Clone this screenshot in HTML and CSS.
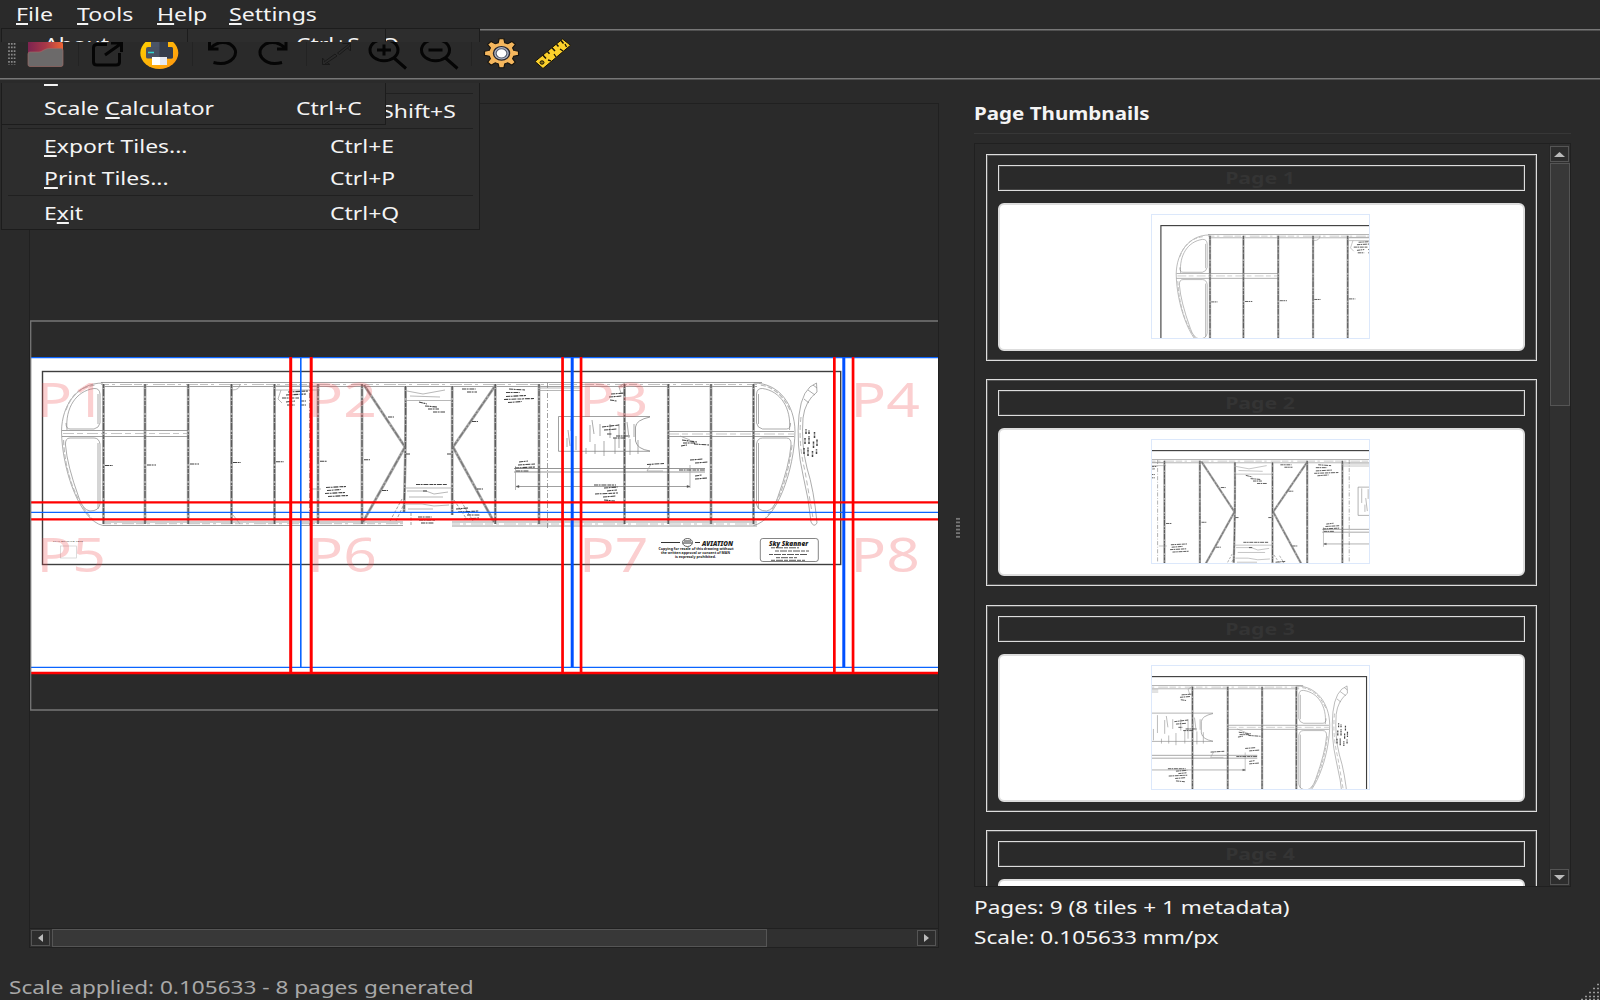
FILE: index.html
```html
<!DOCTYPE html>
<html lang="en">
<head>
<meta charset="utf-8">
<title>Tile Printer</title>
<link rel="stylesheet" href="styles.css">
</head>
<body>
<div class="window">
  <nav class="menubar">
    <span class="menubar-item file"><b class="t"><u>F</u>ile</b></span>
    <span class="menubar-item tools"><b class="t"><u>T</u>ools</b></span>
    <span class="menubar-item help"><b class="t"><u>H</u>elp</b></span>
    <span class="menubar-item settings"><b class="t"><u>S</u>ettings</b></span>
  </nav>

  <div class="menu menu-file">
    <div class="row first"><b class="t key">Ctrl+O</b></div>
    <div class="row second"></div>
    <hr>
    <div class="row"><b class="t key">Ctrl+Shift+S</b></div>
    <hr>
    <div class="row"><b class="t"><u>E</u>xport Tiles...</b><b class="t key">Ctrl+E</b></div>
    <div class="row"><b class="t"><u>P</u>rint Tiles...</b><b class="t key">Ctrl+P</b></div>
    <hr>
    <div class="row"><b class="t">E<u>x</u>it</b><b class="t key">Ctrl+Q</b></div>
  </div>
  <div class="menu menu-tools">
    <div class="row first"><b class="t key">Ctrl+S</b></div>
    <div class="row second"><b class="t"><u>P</u></b></div>
    <div class="row"><b class="t">Scale <u>C</u>alculator</b><b class="t key">Ctrl+C</b></div>
  </div>
  <div class="menu menu-help">
    <div class="row first"><b class="t">About</b></div>
  </div>

  <div class="toolbar">
    <svg width="580" height="55" viewBox="0 28 580 55">
      <defs>
        <linearGradient id="folder" x1="0" x2="1" y1="0" y2="0"><stop offset="0" stop-color="#7c2350"/><stop offset=".5" stop-color="#a83848"/><stop offset="1" stop-color="#ee6535"/></linearGradient>
        <linearGradient id="amber" x1="0" x2="1" y1="0" y2="1"><stop offset="0" stop-color="#ffd400"/><stop offset="1" stop-color="#ff9410"/></linearGradient>
      </defs>
      <g stroke="#8a8a8a" stroke-width="1.700" stroke-dasharray="1.700 1.900"><path d="M9 43v22M11.800 43v22M14.600 43v22"/></g>
      <path d="M78.500 42v24M192.500 42v24M306.500 42v24M471.500 42v24" stroke="#232323"/>
      <path d="M28 39h17l3 3h13q2 0 2 2v21H28z" fill="url(#folder)"/>
      <path d="M28 54q0-2 2-2h9q2 0 4-1.500l2-1q2-1 4-1h12q2 0 2 2v14q0 2-2 2H30q-2 0-2-2z" fill="#6c6a6a" stroke="#9b6a66" stroke-width=".7"/>
      <g fill="none" stroke="#050505" stroke-width="3">
        <path d="M107 44.500H97q-3.500 0-3.500 3.200V62q0 3 3.500 3h19q3.500 0 3.500-3v-9M111 43h10.500v9M122 43l-17 12"/>
        <path d="M209.500 41v8h9M210 48.500q9-9 20-4.500q9 6 3.500 14q-7 8-20 4.500"/>
        <path d="M286 41v8h-9M285.500 48.500q-9-9-20-4.500q-9 6-3.500 14q7 8 20 4.500"/>
        <ellipse cx="384" cy="50" rx="14" ry="10.800"/><path d="M394 58l12 10.500M377 50h14M384 44.500v11"/>
        <ellipse cx="435.500" cy="50" rx="14" ry="10.800"/><path d="M445.500 58l12 10.500M428.500 50h14"/>
      </g>
      <g fill="none" stroke="#191919" stroke-width="1"><path d="M322.500 58v6.500h7.500M322.500 58l2 2.500M330 64.500l-3-2M350.500 51v-7.500h-8M350.500 51l-3-3M324 62l11-8 2 2-12 8M337.500 53l11-8.500 2 1-11 9z"/></g>
      <ellipse cx="159.300" cy="53" rx="19" ry="16" fill="url(#amber)"/>
      <path d="M151 40h17v8h-17z" fill="#4b5567"/>
      <path d="M146 49q0-2 2-2h23q2 0 2 2v8q0 1.500-2 1.500h-23q-2 0-2-1.500z" fill="#4a5363"/>
      <path d="M159.500 47H171q2 0 2 2v8q0 1.500-2 1.500h-11.500zM159.500 40h8.500v7h-8.500z" fill="#343c4b"/><path d="M148 52.500h6" stroke="#35d5d0" stroke-width="1.400"/>
      <path d="M152 57h15v8h-15z" fill="#fff"/><path d="M160 57h7v8h-7z" fill="#e4e7f0"/>
      <g transform="translate(501.500 53.300) scale(1.180 1)">
        <path d="M-2-14.500h4l.8 4 2.500 1 3.500-2.300 2.900 2.900-2.300 3.500 1 2.500 4 .9v4l-4 .9-1 2.500 2.300 3.500-2.900 2.900-3.500-2.300-2.500 1-.8 4h-4l-.8-4-2.500-1-3.500 2.300-2.900-2.900 2.300-3.500-1-2.500-4-.9v-4l4-.9 1-2.500-2.300-3.500 2.900-2.900 3.500 2.300 2.500-1z" fill="#f5b75e" stroke="#17140e" stroke-width="1"/>
        <circle r="6.800" fill="#aeb6c8" stroke="#2a2930" stroke-width="1.200"/><circle r="4.600" fill="#fff" stroke="#555c6c"/>
      </g>
      <g stroke="#171207" stroke-width="1"><path d="M535 61.500L562.500 39l8 6.300L543 68.500z" fill="#fbd02b"/><path d="M543 55.200l3 3.300M547.500 51.500l2 2.200M552 47.800l3 3.300M556.500 44.200l2 2.200M561 40.500l2.500 3" stroke-width="1.500"/><ellipse cx="542" cy="62.500" rx="2" ry="1.700" fill="#8a7418"/><path d="M548 60l3 .8M554 54l2 3M560 49l3 2M565 44l1.500 3" stroke-width="1.300"/></g>
    </svg>
  </div>

  <main class="workspace">
    <section class="canvas">
      <div class="view">
        <svg class="sheet" width="908" height="391" viewBox="30 320 908 391">
          <defs>
            <g id="plan" fill="none" stroke="#777" stroke-width=".7">
              <rect x="42.500" y="371.500" width="798.200" height="193" stroke="#3e3e3e" stroke-width="1.400"/>
              <path d="M101 382.500H762M103 386.500H757M103 522H403M103 525.500H403M452 522H757M452 526H757" stroke="#777"/>
              <path d="M101 384.500H757M103 523.700H403M452 524H757" stroke="#a5a5a5" stroke-dasharray="8 3 3 5 12 2"/>
              <g stroke="#aaa" stroke-width="2.800"><path d="M103.500 384V524M145 384V524M188.200 384V524M231.500 384V524M274.500 384V524M318 384V524M362 384V524M405.500 386Q406 450 404 512M452.200 386V515M495.300 384V524M539 384V524M624.500 384V524M668.300 384V524M711 384V524M753.500 384V524"/><path d="M364 385l41 62-42 75M495 386l-42 61 41 75"/></g>
              <g stroke="#5a5a5a" stroke-width="1.300" stroke-dasharray="4 1 7 2 2 1"><path d="M103.500 384V524M145 384V524M188.200 384V524M231.500 384V524M274.500 384V524M318 384V524M362 384V524M405.500 386Q406 450 404 512M452.200 386V515M495.300 384V524M539 384V524M624.500 384V524M668.300 384V524M711 384V524M753.500 384V524"/><path d="M364 385l41 62-42 75M495 386l-42 61 41 75" stroke="#777"/></g>
              <path d="M547.500 383V528M309.500 383v142" stroke-dasharray="5 2 1 2"/>
              <path id="tip" d="M103 383C77 383 62 405 61.500 431C62 470 80 521 103 525.500M67 430C65 408 76 391 94 388.500Q99.500 388 100 394V423Q99 428 94 429H70Q66 429 66 423M70 438H94Q99 438 100 444V504Q99 511 90 511Q83 510 79 498Q67 465 65.500 445Q65 438 70 438M98 394V424M98 443V509" stroke="#888"/>
              <path d="M63.500 440Q66 490 93 520M66 410Q74 387 96 385" stroke="#bbb" stroke-width="1.200" stroke-dasharray="5 2"/>
              <path d="M62 430.500H188M62 436.500H188M668 431.500H794M668 436.500H794"/>
              <path d="M63 433.500H188M668 434H794" stroke="#aaa" stroke-dasharray="11 3 6 4"/>
              <use href="#tip" transform="translate(856.500 0) scale(-1 1)"/>
              <path d="M790 410Q779 387 760 385M792 445Q786 495 764 520" stroke="#bbb" stroke-width="1.200" stroke-dasharray="5 2"/>
              <path d="M816.500 383Q802 388 799 415Q796 445 803 475Q809 500 811 522Q814 528 817 523Q814 490 807 468Q801 445 803 418Q805 401 817 392ZM813 385l4 3M808 390l7 5M804 399l5 4" stroke="#888"/>
              <path d="M801 417Q798 443 805 471L813 518" stroke="#999" stroke-dasharray="5 3"/>
              <path d="M650 416.500H558.500V451.300H650M650 417Q636 420 635.500 427V441Q637 449 650 451"/>
              <path d="M563 418v18m4 2v9m4-28v12m5 5v14m5-31v22m5 7v6m4-29v17m5 2v10m5-30v12m4 5v15m6-32v14m5 0v16m4-30v24m6-22v13m5 0v16m4-31v13m4 3v14M568 430l2 16m22-26l2 14m33-12l2 16" stroke="#888"/>
              <path d="M514 468.500H705M514 472H705" stroke="#666"/><path d="M515.500 466V490M690 465V488" stroke="#999"/><path d="M516 486.500H690" stroke="#777"/><path d="M516 486.500l3-1v2zM690 486.500l-3-1v2z" fill="#333"/>
              <path d="M405 400.500H452M405 488H452M407 391l16 3 22-4M410 396l30 1M407 491h19l8 3 14-2M409 497h34M406 504h16l12 2 15-1M408 509h25M276 386H320M276 390H320M538 388H582M538 390.500H582M232 390q8 0 8-6M233 515l7 9M311 489h10" stroke="#999"/>
              <path d="M390 521l12-22M396 521l8-17M454 500l12 18M461 501l12 20M411 513v13" stroke-dasharray="3 1.500" stroke="#777"/>
              <path d="M625 383l-6 4 2 6M281 390l-3 9 4 4M663 471l-16 0 4-7M680 436l10 4" stroke="#999"/>
              <g stroke="#444" stroke-width="1.050" stroke-dasharray="4 .6 2 .8 5 1">
                <path d="M105 465.500h8M147 465h9M190 464h9M233 462.500h8M276 461.800h8M320 461.300h7M364 459.800h6M388 417h6M382 490.500h6M472 421.500h6M477 489h6M406 454h4M447 454h4"/>
                <path d="M288 392l20-1m-22 4l20-1m-24 4h17m-13 4l9-1m5 0h6m-19 4h8m5 0h6"/>
                <path d="M419 402l8 2m-2 2l12 1m-9 2h11m-6 3h12M416 484.500h31M423 491h4M462 389h14m-9 3h10"/>
                <path d="M326 487.500l20-1m-19 4l14-1m-16 4l20-1m-17 4l20-1M418 517h14m-13 3h16m-14 3h13M456 509l12-1m-10 4l21-1m-12 4h13m-16 4l15-1"/>
                <path d="M509 389l16 1m-19 2.500h14m-14 4l20-1m-22 4l30-1m-26 4l14-1"/>
                <path d="M611 394l14-1m-16 4l13-1m-12 4l7 1m-15 26l17-2m-15 5l13-1m-10 5h5m4 2h14m-17 2h12"/>
                <path d="M519 462l9-1m-10 4l17-1m-20 4l20-1m-19 4h13M647 464.500l17-1M682 440l15 2m-14 1h12m-14 3l6-1m7-1l15 1M690 460l13-1m-8 4l13-1M679 470h26m-10 6l7-1m-7 4l12-1M594 485h22m-12 3l14-1m-11 4l10-1m-22 4l23-1m-15 4l13-1m-12 4l11 1"/>
              </g>
              <path d="M804 454v-6m1-4v-6m1-4v-5M808 456v-9m1-3v-8m0-2v-4M812.500 457v-6m1-3v-7m1-3v-6M816.500 454v-5m.5-3v-7" stroke="#444" stroke-width="1.500" stroke-dasharray="2 .5 1 .7"/>
              <rect x="60.500" y="546" width="16" height="12" stroke="#ccc"/><rect x="760.300" y="538.500" width="58" height="23" rx="2.500" stroke="#666" stroke-width=".8"/>
              <ellipse cx="687.500" cy="542.500" rx="5" ry="4" stroke="#222"/><path d="M683 543h9M684 541h7M661 542.500h19M695 542.500h5" stroke="#333" stroke-width="1"/>
              <g fill="#222" stroke="none" class="fine"><text x="53" y="542" textLength="30" font-size="2.500">PLAN DRAWING NOTE</text><text class="heavy" x="702" y="545.500" textLength="31" lengthAdjust="spacingAndGlyphs" font-size="6.500">AVIATION</text><text class="bold" x="658.500" y="549.800" textLength="75" lengthAdjust="spacingAndGlyphs" font-size="4">Copying for resale of this drawing without</text><text class="bold" x="661" y="554" textLength="69" lengthAdjust="spacingAndGlyphs" font-size="4">the written approval or consent of MAN</text><text class="bold" x="675" y="558.300" textLength="41" lengthAdjust="spacingAndGlyphs" font-size="4">is expressly prohibited.</text><text class="heavy" x="769" y="545.500" textLength="39" lengthAdjust="spacingAndGlyphs" font-size="7">Sky Skanner</text></g>
              <path d="M771 547.800h28M775 551h34M769 554.500h38M776 557.700h21M771 560.300h34" stroke="#444" stroke-width=".9" stroke-dasharray="4 1 7 1"/>
            </g>
          </defs>
          <rect x="31" y="357" width="907" height="317" fill="#fff"/>
          <use href="#plan"/>
          <g class="tile-label"><text transform="translate(36.500 417) scale(1.240 1)">P1</text><text transform="translate(307.500 417) scale(1.240 1)">P2</text><text transform="translate(579 417) scale(1.240 1)">P3</text><text transform="translate(850.500 417) scale(1.240 1)">P4</text><text transform="translate(36.500 572) scale(1.240 1)">P5</text><text transform="translate(307.500 572) scale(1.240 1)">P6</text><text transform="translate(579 572) scale(1.240 1)">P7</text><text transform="translate(850.500 572) scale(1.240 1)">P8</text></g>
          <g fill="#0a64ff"><path d="M31 357h907v1.200H31zM31 511.700h907v1.200H31zM31 666.700h907v1.200H31zM300 357h1.600v310h-1.600z"/><path d="M570.700 357h3v310h-3zM842.300 357h3v310h-3z" fill="#0050ff"/></g>
          <path d="M31 501.200h907v2.400H31zM31 518.200h907v2.400H31zM31 671.700h907v2.600H31zM289.200 357h3v315h-3zM309.700 357h3v315h-3zM561.200 357h2.700v315h-2.700zM579.700 357h2.700v315h-2.700zM833 357h2.700v315H833zM851.700 357h2.700v315h-2.700z" fill="#f00"/>
          <path d="M938 321H30.700V710H938" fill="none" stroke="#777" stroke-width="1.300"/>
        </svg>
      </div>
      <div class="hscroll">
        <span class="arrow-btn"><svg width="7" height="8"><path d="M6 0v8L1 4z"/></svg></span>
        <span class="hthumb"></span><span class="grow"></span>
        <span class="arrow-btn last"><svg width="7" height="8"><path d="M1 0v8L6 4z"/></svg></span>
      </div>
    </section>
    <div class="splitter"><i></i></div>
    <aside class="side">
      <h2><b class="t">Page Thumbnails</b></h2>
      <div class="list">
        <div class="cards">
          <div class="card"><div class="caption"><b class="t">Page 1</b></div><div class="picture"><svg width="219" height="125" viewBox="30.200 357.200 272 154" preserveAspectRatio="none"><use href="#plan"/></svg></div></div>
          <div class="card"><div class="caption"><b class="t">Page 2</b></div><div class="picture"><svg width="219" height="125" viewBox="301.300 357.200 272 154" preserveAspectRatio="none"><use href="#plan"/></svg></div></div>
          <div class="card"><div class="caption"><b class="t">Page 3</b></div><div class="picture"><svg width="219" height="125" viewBox="573 357.200 272 154" preserveAspectRatio="none"><use href="#plan"/></svg></div></div>
          <div class="card"><div class="caption"><b class="t">Page 4</b></div><div class="picture"></div></div>
        </div>
        <div class="vscroll">
          <span class="arrow-btn"><svg width="11" height="5"><path d="M0 5h11L5.500 0z"/></svg></span>
          <span class="vthumb"></span><span class="grow"></span>
          <span class="arrow-btn"><svg width="11" height="5"><path d="M0 0h11L5.500 5z"/></svg></span>
        </div>
      </div>
      <p><b class="t">Pages: 9 (8 tiles + 1 metadata)</b></p>
      <p><b class="t">Scale: 0.105633 mm/px</b></p>
    </aside>
  </main>
  <footer class="status"><b class="t">Scale applied: 0.105633 - 8 pages generated</b>
    <svg class="grip" width="20" height="17"><path d="M17 1.500h2M13 5.500h6M9 9.500h10M5 13.500h14M1 16.500h18" stroke="#999" stroke-width="1.700" stroke-dasharray="2 2"/></svg>
  </footer>
</div>
</body>
</html>
```
FILE: styles.css
```css
* { box-sizing: border-box; }
body { margin: 0; background: #2a2a2a; color: #f4f4f4; font: 17.5px/24px "Noto Sans", "Open Sans", sans-serif; overflow: hidden; }
.window { position: relative; width: 1600px; height: 1000px; display: flex; flex-direction: column; }
.t { display: inline-block; font-weight: 400; white-space: pre; transform: scaleX(1.29); transform-origin: 0 50%; }
u { text-decoration-thickness: 1.5px; text-underline-offset: 2px; text-decoration-skip-ink: none; }

.menubar { height: 28px; display: flex; padding-left: 15.5px; }
.menubar-item { line-height: 28px; }
.menubar .t { transform: scaleX(1.32); }
.file { width: 61px; }
.tools { width: 80px; }
.help { width: 72px; }

.menu { position: absolute; left: 1px; top: 28px; background: #2d2d2d; border: 1px solid #1c1c1c; z-index: 1; }
.menu .t { transform: scaleX(1.31); }
.menu-file { width: 479px; height: 202px; }
.menu-tools { width: 385px; height: 97px; }
.menu-help { width: 187px; height: 50px; }
.row { height: 32px; line-height: 33px; padding-left: 41.5px; position: relative; }
.row.first { height: 29px; line-height: 30px; }
.row.second { height: 34px; line-height: 35px; }
.menu-file .key { position: absolute; left: 327.5px; }
.menu-tools .key { position: absolute; left: 293.5px; }
.menu hr { height: 1px; margin: 1px 6px; border: 0; background: #202020; }

.toolbar { position: relative; z-index: 2; height: 55px; background: #2a2a2a; clip-path: polygon(0 14px, 480px 14px, 480px 0, 100% 0, 100% 100%, 0 100%); background-image: linear-gradient(#777, #777), linear-gradient(#777, #777); background-size: 100% 1.5px; background-repeat: no-repeat; background-position: 0 0.5px, 0 50px; }
.toolbar svg { display: block; }

.workspace { flex: 1; display: flex; padding: 20px 29px 0 29px; }
.canvas { width: 910px; height: 845px; border: 1px solid #202020; display: flex; flex-direction: column; }
.view { flex: 1; display: flex; align-items: flex-start; padding-top: 216px; }
.sheet { display: block; flex: none; }
.hscroll { height: 19px; display: flex; background: #303030; border-top: 1px solid #202020; }
.arrow-btn { width: 19px; height: 16px; margin: 1px; border: 1px solid #555; background: #2d2d2d; flex: none; display: flex; align-items: center; justify-content: center; }
.arrow-btn.last { margin-right: 2px; }
.arrow-btn svg { fill: #bbb; display: block; }
.hthumb { width: 715px; margin-left: 1px; background: #383838; border: 1px solid #555; }
.grow { flex: 1; }
.splitter { width: 35px; display: flex; padding: 414px 0 0 17px; }
.splitter i { width: 4px; height: 22px; background: radial-gradient(circle, #777 .7px, transparent 1px) 0 0 / 2px 3.600px; }

.side { width: 597px; }
h2 { margin: 0 0 9px; height: 31px; border-bottom: 1px solid #373737; font-size: 17.5px; line-height: 20px; }
h2 .t { font-weight: 700; transform: scaleX(1.175); }
.list { height: 744px; border: 1px solid #202020; display: flex; overflow: hidden; margin-bottom: 5px; }
.cards { width: 574px; padding: 10px 0 0 11px; }
.card { width: 551px; height: 207px; margin-bottom: 18.300px; border: 1px solid #ddd; box-shadow: inset 0 0 0 1px #555; padding: 10px 11px; }
.caption { height: 26px; border: 1px solid #ddd; box-shadow: inset 0 0 0 1px #444; text-align: center; line-height: 24px; color: #343434; font-size: 16.5px; }
.caption .t { font-weight: 700; transform-origin: 50% 50%; position: relative; left: -1.5px; }
.picture { margin-top: 12px; height: 148px; border: 2px solid #ddd; border-radius: 6px; background: #fff; display: flex; align-items: center; justify-content: center; padding: 0 3px 1px 0; }
.picture svg { outline: 1px solid #dce8fb; outline-offset: -1px; }
.vscroll { width: 21px; background: #303030; display: flex; flex-direction: column; border-left: 1px solid #262626; }
.vscroll .arrow-btn { margin: 2px 2px 1px 0; }
.vthumb { height: 243px; background: #383838; border: 1px solid #555; }
.side p { margin: 0; height: 30px; line-height: 30px; }

.status { height: 30px; line-height: 34px; padding-left: 9px; color: #a8a8a8; }
.grip { position: absolute; right: 0; bottom: 0; }

.tile-label { font: 47.5px "Noto Sans", sans-serif; fill: rgb(240, 70, 75); opacity: .26; }
.fine { font-family: "Noto Sans", sans-serif; }
.bold { font-weight: 700; }
.heavy { font-weight: 900; font-style: italic; }
```
